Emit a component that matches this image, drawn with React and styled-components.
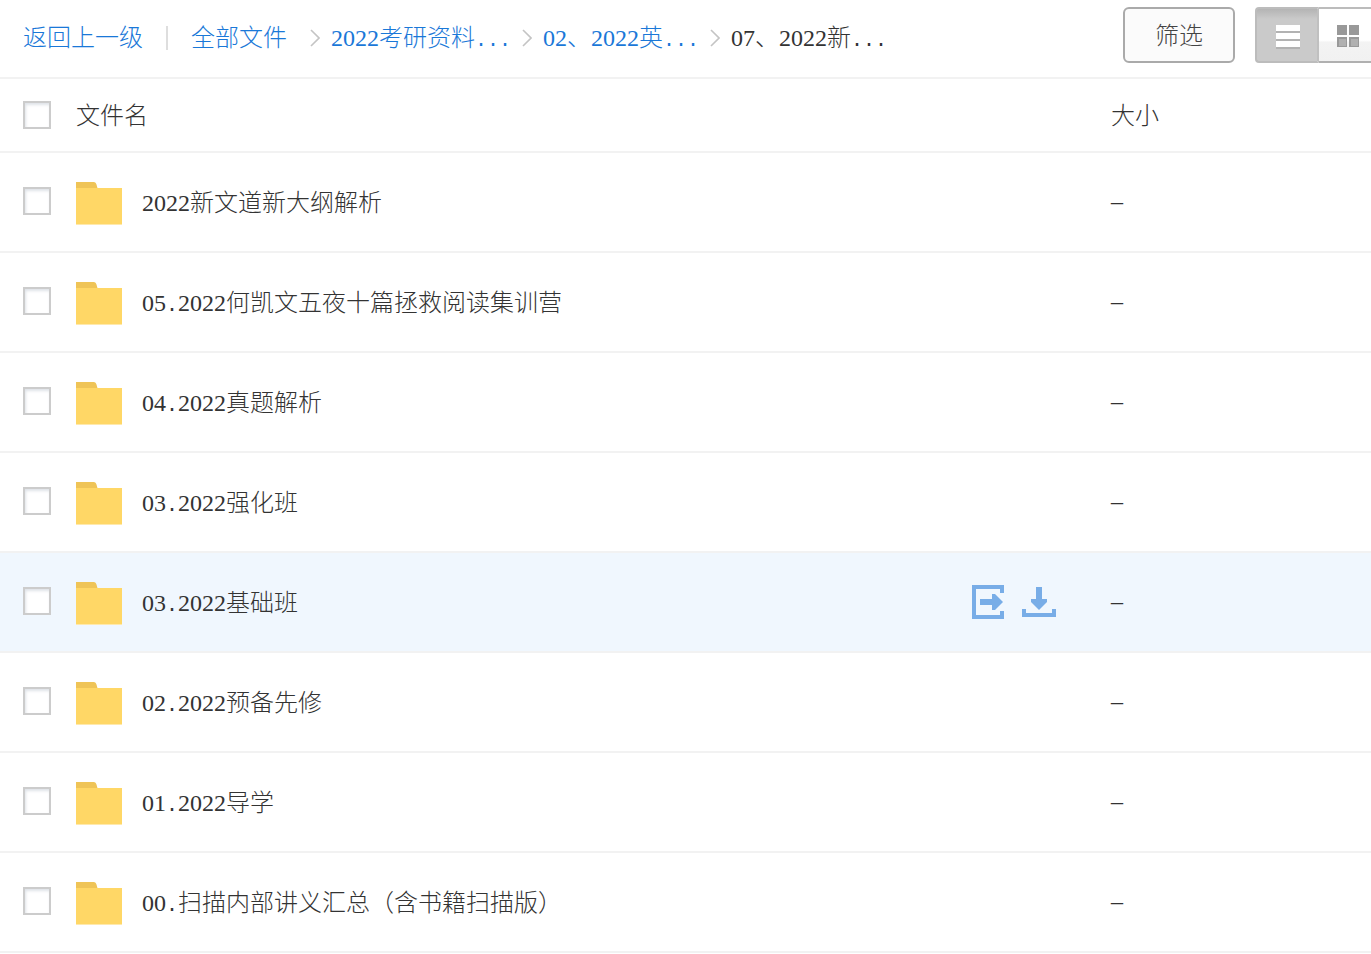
import React from "react";
import styled, { createGlobalStyle, css } from "styled-components";

const GlobalStyle = createGlobalStyle`
  *, *::before, *::after { box-sizing: border-box; }
  body {
    margin: 0;
    background: #fff;
    color: #333;
    font-family: "Liberation Serif", "Noto Sans CJK SC", serif;
    font-size: 24px;
    font-weight: 300;
    line-height: 32px;
  }
  button { font: inherit; color: inherit; }
`;

const LINE = "#f2f2f2";
const LINK = "#1a78d8";

const Page = styled.main`
  overflow: hidden;
`;

const Toolbar = styled.header`
  display: flex;
  align-items: center;
  justify-content: space-between;
  padding: 7px 0 14px 23px;
  border-bottom: 2px solid ${LINE};
`;

const Breadcrumb = styled.nav`
  display: flex;
  align-items: center;
  padding-top: 6px;
  white-space: nowrap;
`;

const CrumbLink = styled.a`
  color: ${LINK};
  text-decoration: none;
`;

const Divider = styled.span`
  width: 2px;
  height: 24px;
  margin: 0 23px;
  background: #dedede;
`;

const Chevron = styled.svg`
  flex: none;
  width: 10px;
  height: 18px;
  margin: 0 11px;
  margin-left: ${(p) => (p.$wide ? "23px" : "11px")};
  fill: none;
  stroke: #c4c4c4;
  stroke-width: 1.6;
`;

const Dots = styled.span`
  font-family: "Liberation Mono", monospace;
  font-size: 20px;
  line-height: 20px;
`;

const Tools = styled.div`
  display: flex;
  flex: none;
  gap: 20px;
`;

const FilterButton = styled.button`
  width: 112px;
  height: 56px;
  padding: 2px 0 0;
  border: 2px solid #aaa;
  border-radius: 6px;
  background: #fbfbfb;
  color: #444;
`;

const ViewSwitch = styled.div`
  display: flex;
  height: 56px;
`;

const ViewButton = styled.button`
  display: flex;
  align-items: center;
  height: 56px;
  border: 0;
  ${(p) =>
    p.$active
      ? css`
          width: 64px;
          padding: 4px 0 0 18px;
          border: 2px solid #bcbcbc;
          border-right-color: #c0c0c0;
          border-radius: 4px 0 0 4px;
          background: linear-gradient(#b4b4b4, #cacaca 10px, #cacaca);
        `
      : css`
          width: 52px;
          padding: 4px 0 0 17px;
          border-top: 2px solid #bcbcbc;
          border-bottom: 2px solid #b0b0b0;
          background: linear-gradient(#fff 60%, #f3f3f3 64%, #f1f1f1);
        `}
`;

const ViewIcon = styled.svg`
  display: block;
  width: 26px;
  height: 26px;
`;

const Table = styled.table`
  width: 100%;
  table-layout: fixed;
  border-collapse: separate;
  border-spacing: 0;
`;

const Row = styled.tr`
  height: ${(p) => (p.$head ? "74px" : "100px")};
  background: ${(p) => (p.$hovered ? "#f0f7fe" : "transparent")};
`;

const cell = css`
  border-bottom: 2px solid ${LINE};
  font-weight: inherit;
  text-align: left;
  vertical-align: middle;
`;

const HeadCell = styled.th`
  ${cell}
  width: ${(p) => (p.$size ? "260px" : "auto")};
  padding: ${(p) => (p.$size ? "2px 0 0" : "0")};
`;

const Cell = styled.td`
  ${cell}
  padding: 0 0 2px;
`;

const NameCell = styled.div`
  display: flex;
  align-items: center;
  padding-left: 23px;
`;

const Checkbox = styled.input`
  appearance: none;
  flex: none;
  width: 28px;
  height: 28px;
  margin: 0 25px 0 0;
  border: 2px solid #ccc;
  background: #fff;
  box-shadow: inset 1px 2px 3px #dfe3e8;
  &:checked { background: ${LINK}; }
`;

const FileLabel = styled.label`
  display: flex;
  flex: 1;
  align-items: center;
  gap: 20px;
  padding-top: ${(p) => (p.$head ? "2px" : "4px")};
`;

const FolderSvg = styled.svg`
  flex: none;
  width: 46px;
  height: 44px;
`;

const Actions = styled.div`
  display: flex;
  gap: 16px;
  padding: 2px 54px 0 0;
`;

const ActionButton = styled.button`
  padding: 0;
  border: 0;
  background: none;
  color: #78ade7;
  svg { display: block; }
`;

function Mixed({ text }) {
  return text
    .split(/(\.+)/)
    .map((part, i) => (i % 2 ? <Dots key={i}>{part}</Dots> : part));
}

function Separator({ wide }) {
  return (
    <Chevron $wide={wide} viewBox="0 0 10 18" aria-hidden="true">
      <path d="M1 1l8 8-8 8" />
    </Chevron>
  );
}

function FolderIcon() {
  return (
    <FolderSvg viewBox="0 0 46 44" aria-hidden="true">
      <path d="M0 1h18q2 0 2.500 2.500L22 9H0z" fill="#efc457" />
      <path d="M0 7h46v37H0z" fill="#ffd766" />
      <path d="M0 43h46v1H0z" fill="#ffe9ac" />
    </FolderSvg>
  );
}

function SaveIcon() {
  return (
    <svg width="34" height="36" viewBox="0 0 34 36" aria-hidden="true">
      <path d="M31 9V3H3v30h28v-6" fill="none" stroke="currentColor" strokeWidth="4" />
      <path d="M9 15h12v-5h3l8 8-8 8h-3v-5H9z" fill="currentColor" />
    </svg>
  );
}

function DownloadIcon() {
  return (
    <svg width="36" height="36" viewBox="0 0 36 36" aria-hidden="true">
      <path d="M3 25v6h30v-6" fill="none" stroke="currentColor" strokeWidth="4" />
      <path d="M15 3h6v12h5v3l-8 8-8-8v-3h5z" fill="currentColor" />
    </svg>
  );
}

const files = [
  "2022新文道新大纲解析",
  "05.2022何凯文五夜十篇拯救阅读集训营",
  "04.2022真题解析",
  "03.2022强化班",
  "03.2022基础班",
  "02.2022预备先修",
  "01.2022导学",
  "00.扫描内部讲义汇总（含书籍扫描版）",
];
const HOVERED = 4;

export default function App() {
  return (
    <Page>
      <GlobalStyle />
      <Toolbar>
        <Breadcrumb aria-label="路径">
          <CrumbLink href="#up">返回上一级</CrumbLink>
          <Divider />
          <CrumbLink href="#all">全部文件</CrumbLink>
          <Separator wide />
          <CrumbLink href="#1"><Mixed text="2022考研资料..." /></CrumbLink>
          <Separator />
          <CrumbLink href="#2"><Mixed text="02、2022英..." /></CrumbLink>
          <Separator />
          <span><Mixed text="07、2022新..." /></span>
        </Breadcrumb>
        <Tools>
          <FilterButton type="button">筛选</FilterButton>
          <ViewSwitch>
            <ViewButton type="button" $active aria-label="列表" aria-pressed="true">
              <ViewIcon viewBox="0 0 26 26" aria-hidden="true">
                <path d="M1 3h24v6H1zM1 11h24v6H1zM1 19h24v6H1z" fill="#b2b2b2" />
                <path d="M1 1h24v6H1zM1 9h24v6H1zM1 17h24v6H1z" fill="#fff" />
              </ViewIcon>
            </ViewButton>
            <ViewButton type="button" aria-label="网格" aria-pressed="false">
              <ViewIcon viewBox="0 0 26 26" aria-hidden="true">
                <path d="M1 1h10v10H1zM13 1h10v10H13z" fill="#999" />
                <path d="M1 13h10v10H1zM13 13h10v10H13z" fill="#999" />
                <path d="M3 15h7v7H3zM15 15h7v7h-7z" fill="#b0b0b0" />
              </ViewIcon>
            </ViewButton>
          </ViewSwitch>
        </Tools>
      </Toolbar>
      <Table>
        <thead>
          <Row $head>
            <HeadCell scope="col">
              <NameCell>
                <Checkbox type="checkbox" id="all" />
                <FileLabel $head htmlFor="all">文件名</FileLabel>
              </NameCell>
            </HeadCell>
            <HeadCell scope="col" $size>大小</HeadCell>
          </Row>
        </thead>
        <tbody>
          {files.map((name, i) => (
            <Row key={name} $hovered={i === HOVERED}>
              <Cell>
                <NameCell>
                  <Checkbox type="checkbox" id={`file-${i}`} />
                  <FileLabel htmlFor={`file-${i}`}>
                    <FolderIcon />
                    <span><Mixed text={name} /></span>
                  </FileLabel>
                  {i === HOVERED && (
                    <Actions>
                      <ActionButton type="button" aria-label="保存"><SaveIcon /></ActionButton>
                      <ActionButton type="button" aria-label="下载"><DownloadIcon /></ActionButton>
                    </Actions>
                  )}
                </NameCell>
              </Cell>
              <Cell>–</Cell>
            </Row>
          ))}
        </tbody>
      </Table>
    </Page>
  );
}
